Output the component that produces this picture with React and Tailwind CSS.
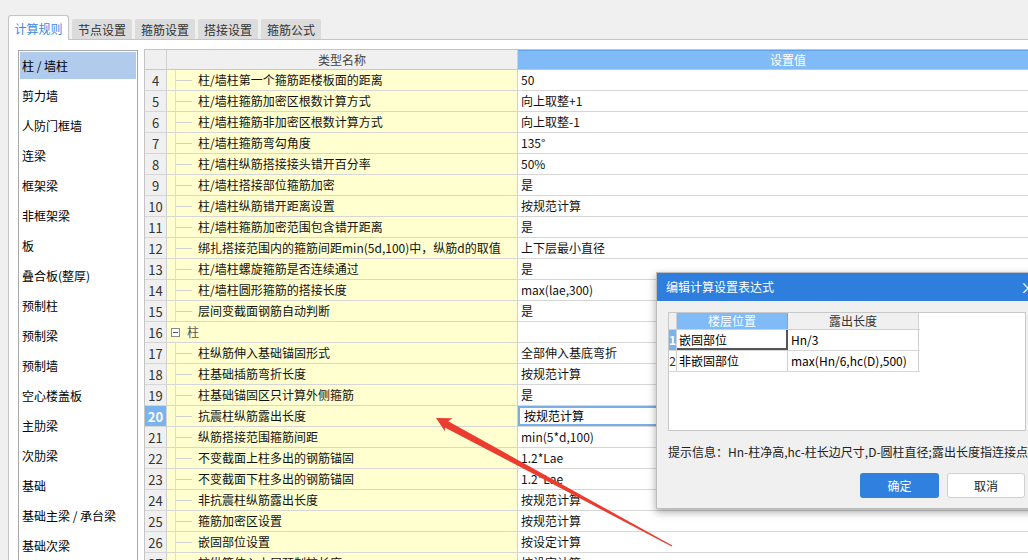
const tabs = ["节点设置", "箍筋设置", "搭接设置", "箍筋公式"];

const listItems = [
  "柱 / 墙柱",
  "剪力墙",
  "人防门框墙",
  "连梁",
  "框架梁",
  "非框架梁",
  "板",
  "叠合板(整厚)",
  "预制柱",
  "预制梁",
  "预制墙",
  "空心楼盖板",
  "主肋梁",
  "次肋梁",
  "基础",
  "基础主梁 / 承台梁",
  "基础次梁",
];

const rows = [
  [4, "柱/墙柱第一个箍筋距楼板面的距离", "50"],
  [5, "柱/墙柱箍筋加密区根数计算方式", "向上取整+1"],
  [6, "柱/墙柱箍筋非加密区根数计算方式", "向上取整-1"],
  [7, "柱/墙柱箍筋弯勾角度", "135°"],
  [8, "柱/墙柱纵筋搭接接头错开百分率", "50%"],
  [9, "柱/墙柱搭接部位箍筋加密", "是"],
  [10, "柱/墙柱纵筋错开距离设置", "按规范计算"],
  [11, "柱/墙柱箍筋加密范围包含错开距离", "是"],
  [12, "绑扎搭接范围内的箍筋间距min(5d,100)中，纵筋d的取值", "上下层最小直径"],
  [13, "柱/墙柱螺旋箍筋是否连续通过", "是"],
  [14, "柱/墙柱圆形箍筋的搭接长度", "max(lae,300)"],
  [15, "层间变截面钢筋自动判断", "是"],
  [16, "柱", "", "group"],
  [17, "柱纵筋伸入基础锚固形式", "全部伸入基底弯折"],
  [18, "柱基础插筋弯折长度", "按规范计算"],
  [19, "柱基础锚固区只计算外侧箍筋", "是"],
  [20, "抗震柱纵筋露出长度", "按规范计算", "selected"],
  [21, "纵筋搭接范围箍筋间距", "min(5*d,100)"],
  [22, "不变截面上柱多出的钢筋锚固", "1.2*Lae"],
  [23, "不变截面下柱多出的钢筋锚固", "1.2*Lae"],
  [24, "非抗震柱纵筋露出长度", "按规范计算"],
  [25, "箍筋加密区设置", "按规范计算"],
  [26, "嵌固部位设置", "按设定计算"],
  [27, "柱纵筋伸入上层预制柱长度", "按设定计算"],
];

function Row({ n, name, value, kind }) {
  const selected = kind === "selected";
  const group = kind === "group";
  return (
    <div className="flex h-[21px] shrink-0 border-b border-[#d6d6d6]">
      <div
        className={
          selected
            ? "w-[22px] shrink-0 border-r border-[#d0d0d0] bg-[#7ab4ee] flex items-center justify-center text-[13px] font-bold text-white"
            : "w-[22px] shrink-0 border-r border-[#d0d0d0] bg-[#f0f0f0] flex items-center justify-center text-[13px] text-[#333]"
        }
      >
        {n}
      </div>
      <div className="w-[351px] shrink-0 border-r border-[#d0d0d0] bg-[#ffffd0] flex items-center whitespace-nowrap">
        {group ? (
          <>
            <span className="ml-[4px] w-[9px] h-[9px] border border-[#8a8a8a] bg-white flex items-center justify-center">
              <span className="w-[5px] h-px bg-[#555]" />
            </span>
            <span className="ml-[7px] text-[#555]">{name}</span>
          </>
        ) : (
          <>
            <span className="ml-[8px] w-px self-stretch bg-[#dcdcdc]" />
            <span className="w-[16px] h-px bg-[#cfcfcf]" />
            <span className="ml-[6px] text-[#111]">{name}</span>
          </>
        )}
      </div>
      <div
        className={
          selected
            ? "w-[540px] shrink-0 bg-white flex items-center pl-[6px] shadow-[inset_0_0_0_2px_#7aaee6] whitespace-nowrap"
            : "w-[540px] shrink-0 bg-white flex items-center pl-[3px] whitespace-nowrap text-[#111]"
        }
      >
        {value}
      </div>
    </div>
  );
}

export default function App() {
  return (
    <div className="relative w-[1028px] h-[560px] overflow-hidden bg-[#f0f0f0] font-['Noto_Sans_CJK_SC','Microsoft_YaHei',sans-serif] text-[12px] text-black leading-none">
      {/* Tabs */}
      <div className="flex items-end gap-[3px] pl-[8px] pt-[15px] h-[39px]">
        <div className="relative z-10 -mb-px h-[25px] w-[61px] bg-white border border-b-0 border-[#c4c4c4] rounded-t-[3px] flex items-center justify-center text-[#3a8be2] pt-[2px]">
          计算规则
        </div>
        {tabs.map((t) => (
          <div
            key={t}
            className="h-[20px] w-[60px] bg-[#dcdcdc] rounded-t-[2px] flex items-center justify-center text-[#333] pt-[1px]"
          >
            {t}
          </div>
        ))}
      </div>

      {/* Panel */}
      <div className="ml-[8px] h-[521px] bg-white border-l border-t border-[#c4c4c4] flex items-start pl-[9px] pt-[10px]">
        {/* Left list */}
        <div className="w-[120px] h-[520px] shrink-0 border border-[#a9a9a9] bg-white flex flex-col">
          {listItems.map((item, i) => (
            <div key={item} className="h-[30px] shrink-0 px-px">
              <div
                className={
                  i === 0
                    ? "mt-px h-[27px] bg-[#b0cbec] flex items-center pl-[2px] whitespace-nowrap"
                    : "mt-px h-[27px] flex items-center pl-[2px] whitespace-nowrap"
                }
              >
                {item}
              </div>
            </div>
          ))}
        </div>

        {/* Table */}
        <div className="ml-[6px] -mt-px flex-1 h-[512px] border-l border-t border-[#c4c4c4] overflow-hidden flex flex-col">
          <div className="flex h-[20px] shrink-0 border-b border-[#c8c8c8]">
            <div className="w-[22px] shrink-0 border-r border-[#d0d0d0] bg-[#f0f0f0]" />
            <div className="w-[351px] shrink-0 border-r border-[#d0d0d0] bg-[#f0f0f0] flex items-center justify-center text-[#444]">
              类型名称
            </div>
            <div className="w-[540px] shrink-0 bg-[#80bbf7] shadow-[inset_0_1px_0_#62a5ee] flex items-center justify-center text-white">
              设置值
            </div>
          </div>
          {rows.map(([n, name, value, kind]) => (
            <Row key={n} n={n} name={name} value={value} kind={kind} />
          ))}
        </div>
      </div>

      {/* Dialog */}
      <div className="absolute left-[656px] top-[272px] w-[400px] h-[237px] bg-[#f0f0f0] border border-[#bcbcbc] shadow-[0_3px_8px_rgba(0,0,0,0.35)] flex flex-col">
        <div className="relative h-[28px] shrink-0 bg-[#2e7fdd] text-white flex items-center pl-[9px]">
          编辑计算设置表达式
          <span className="absolute left-[363px] top-[6px] text-[16px] leading-none">×</span>
        </div>
        <div className="pl-[11px] pt-[11px]">
          <div className="w-[358px] h-[119px] bg-white border border-[#c8c8c8] flex flex-col">
            <div className="flex h-[17px] w-[251px] shrink-0 border-b border-[#d0d0d0]">
              <div className="w-[8px] shrink-0 border-r border-[#d0d0d0] bg-[#f0f0f0]" />
              <div className="w-[111px] shrink-0 border-r border-[#6aa8ec] bg-[#80bbf7] text-white flex items-center justify-center">
                楼层位置
              </div>
              <div className="w-[131px] shrink-0 border-r border-[#d0d0d0] bg-[#f0f0f0] text-[#333] flex items-center justify-center">
                露出长度
              </div>
            </div>
            <div className="flex h-[21px] w-[251px] shrink-0 border-b border-[#d6d6d6]">
              <div className="w-[8px] shrink-0 border-r border-[#d0d0d0] bg-[#7ab4ee] text-white font-bold flex items-center justify-center text-[12px]">
                1
              </div>
              <div className="w-[111px] shrink-0 bg-white shadow-[inset_-2px_-2px_0_#555] flex items-center pl-[2px]">
                嵌固部位
              </div>
              <div className="w-[131px] shrink-0 border-r border-[#d0d0d0] flex items-center pl-[3px]">
                Hn/3
              </div>
            </div>
            <div className="flex h-[21px] shrink-0 border-b border-[#d6d6d6] w-[251px]">
              <div className="w-[8px] shrink-0 border-r border-[#d0d0d0] text-[#333] flex items-center justify-center text-[12px]">
                2
              </div>
              <div className="w-[111px] shrink-0 border-r border-[#d0d0d0] flex items-center pl-[2px]">
                非嵌固部位
              </div>
              <div className="w-[131px] shrink-0 border-r border-[#d0d0d0] flex items-center pl-[3px] whitespace-nowrap">
                max(Hn/6,hc(D),500)
              </div>
            </div>
          </div>
          <div className="mt-[12px] h-[18px] flex items-center whitespace-nowrap text-[#222]">
            提示信息：Hn-柱净高,hc-柱长边尺寸,D-圆柱直径;露出长度指连接点距楼地面的高度
          </div>
          <div className="mt-[12px] flex gap-[8px] pl-[192px]">
            <div className="w-[79px] h-[25px] rounded-[3px] bg-[#2f80df] text-white flex items-center justify-center">
              确定
            </div>
            <div className="w-[78px] h-[25px] rounded-[3px] bg-white border border-[#cfcfcf] text-[#222] flex items-center justify-center">
              取消
            </div>
          </div>
        </div>
      </div>

      {/* Red arrow annotation */}
      <svg className="absolute left-0 top-0 pointer-events-none" width="1028" height="560" viewBox="0 0 1028 560">
        <polygon
          points="436,418 452.5,418.2 448.2,421.3 672.3,545.5 671.7,546.5 444.8,427.4 445.1,431.6"
          fill="#ec3b2f"
        />
      </svg>
    </div>
  );
}
